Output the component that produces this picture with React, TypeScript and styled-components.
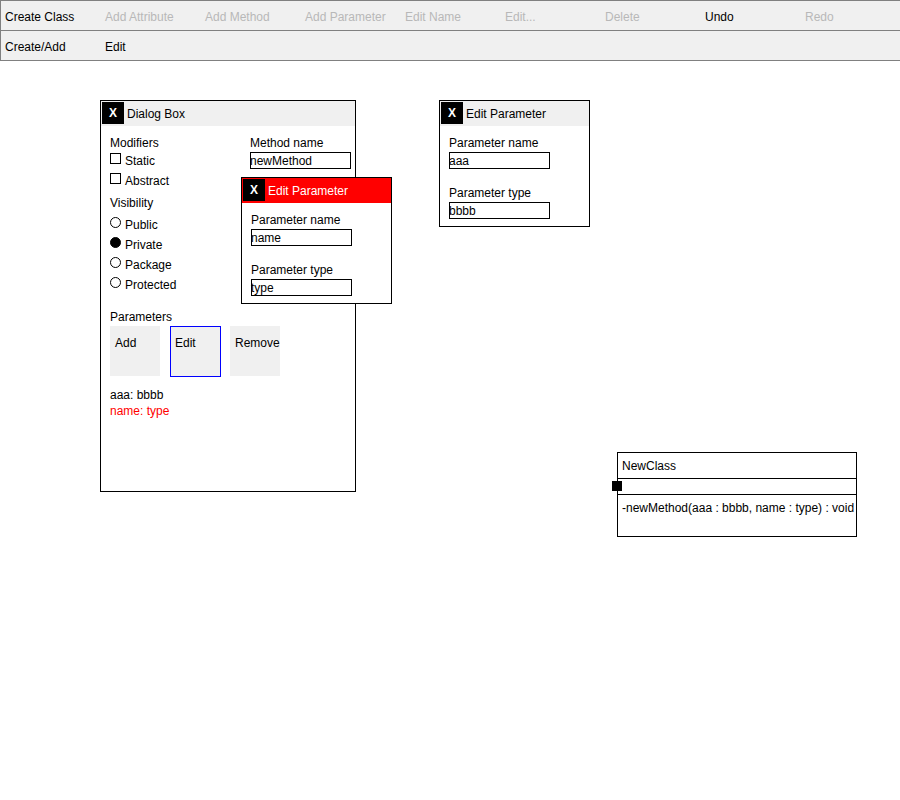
import React from "react";
import styled, { createGlobalStyle } from "styled-components";

const GlobalStyle = createGlobalStyle`
  html, body { margin: 0; padding: 0; background: #fff; }
  body {
    font-family: "Liberation Sans", Arial, sans-serif;
    font-size: 12px;
    color: #000;
  }
  * { box-sizing: border-box; }
`;

const Page = styled.div`
  width: 900px;
  height: 800px;
  display: flex;
  flex-direction: column;
  background: #fff;
`;

const Toolbar = styled.div`
  width: 900px;
  flex: none;
  border-top: 1px solid #808080;
  border-left: 1px solid #808080;
  background: #f0f0f0;
`;

const ToolRow = styled.div`
  display: flex;
  height: 30px;
  border-bottom: 1px solid #808080;
`;

const ToolButton = styled.div<{ $disabled?: boolean }>`
  flex: none;
  width: 100px;
  padding: 3px 0 0 4px;
  line-height: 27px;
  white-space: nowrap;
  color: ${(p) => (p.$disabled ? "#b8b8b8" : "#000")};
`;

const Canvas = styled.div`
  position: relative;
  flex: 1;
  background: #fff;
`;

const Window = styled.div<{ $x: number; $y: number; $w: number; $h: number }>`
  position: absolute;
  left: ${(p) => p.$x}px;
  top: ${(p) => p.$y}px;
  width: ${(p) => p.$w}px;
  height: ${(p) => p.$h}px;
  border: 1px solid #000;
  background: #fff;
  display: flex;
  flex-direction: column;
`;

const TitleBar = styled.div<{ $alert?: boolean }>`
  flex: none;
  height: 25px;
  display: flex;
  align-items: flex-start;
  background: ${(p) => (p.$alert ? "#ff0000" : "#f0f0f0")};
  color: ${(p) => (p.$alert ? "#fff" : "#000")};
`;

const CloseBox = styled.div`
  width: 22px;
  height: 22px;
  margin: 1px 0 0 1px;
  background: #000;
  color: #fff;
  font-weight: bold;
  font-size: 12px;
  display: flex;
  align-items: center;
  justify-content: center;
`;

const Title = styled.div`
  margin-left: 3px;
  padding-top: 1px;
  line-height: 25px;
  white-space: nowrap;
`;

const Content = styled.div`
  padding: 10px 9px 0 9px;
  display: flex;
  flex-direction: column;
`;

const Label = styled.div`
  line-height: 14px;
  height: 14px;
  white-space: nowrap;
`;

const FieldGroup = styled.div`
  display: flex;
  flex-direction: column;
  & + & {
    margin-top: 17px;
  }
`;

const FieldBox = styled.div`
  width: 101px;
  height: 17px;
  margin-top: 2px;
  border: 1px solid #000;
  line-height: 17px;
  text-indent: -1px;
  white-space: nowrap;
`;

const TopSection = styled.div`
  display: flex;
`;

const LeftCol = styled.div`
  width: 140px;
  flex: none;
  display: flex;
  flex-direction: column;
`;

const RightCol = styled.div`
  display: flex;
  flex-direction: column;
`;

const GroupLabel = styled(Label)<{ $gap?: number }>`
  margin-top: ${(p) => p.$gap ?? 0}px;
`;

const OptionList = styled.div<{ $gap: number }>`
  display: flex;
  flex-direction: column;
  margin-top: ${(p) => p.$gap}px;
`;

const OptionRow = styled.div`
  display: flex;
  align-items: flex-start;
  height: 20px;
  line-height: 20px;
  white-space: nowrap;
`;

const CheckMark = styled.span`
  width: 11px;
  height: 11px;
  margin: 2px 4px 0 0;
  border: 1px solid #000;
  background: #fff;
  flex: none;
`;

const RadioMark = styled.span<{ $checked?: boolean }>`
  width: 11px;
  height: 11px;
  margin: 2px 4px 0 0;
  border: 1px solid #000;
  border-radius: 50%;
  background: ${(p) => (p.$checked ? "#000" : "#fff")};
  flex: none;
`;

const ButtonGrid = styled.div`
  display: grid;
  grid-template-columns: repeat(3, 50px);
  column-gap: 10px;
  align-items: start;
  margin-top: 2px;
`;

const ParamButton = styled.div<{ $selected?: boolean }>`
  width: ${(p) => (p.$selected ? 51 : 50)}px;
  height: ${(p) => (p.$selected ? 51 : 50)}px;
  background: #f0f0f0;
  border: ${(p) => (p.$selected ? "1px solid #0000ff" : "none")};
  padding: ${(p) => (p.$selected ? "9px 0 0 4px" : "10px 0 0 5px")};
  line-height: 14px;
  white-space: nowrap;
  overflow: hidden;
`;

const ParamList = styled.div`
  margin-top: 10px;
  display: flex;
  flex-direction: column;
`;

const ParamItem = styled.div<{ $active?: boolean }>`
  line-height: 16px;
  color: ${(p) => (p.$active ? "#ff0000" : "#000")};
`;

const ClassBox = styled.div<{ $x: number; $y: number }>`
  position: absolute;
  left: ${(p) => p.$x}px;
  top: ${(p) => p.$y}px;
  width: 240px;
  border: 1px solid #000;
  background: #fff;
`;

const ClassHeader = styled.div`
  height: 26px;
  line-height: 25px;
  padding: 1px 0 0 4px;
  border-bottom: 1px solid #000;
`;

const AttrSection = styled.div`
  height: 16px;
  border-bottom: 1px solid #000;
`;

const MethodSection = styled.div`
  height: 41px;
  padding: 6px 0 0 4px;
  line-height: 14px;
  white-space: nowrap;
`;

const Handle = styled.div`
  position: absolute;
  left: -6px;
  top: 28px;
  width: 10px;
  height: 10px;
  background: #000;
`;

type ParamWinProps = { x: number; y: number; alert?: boolean; name: string; type: string };

const EditParameterWindow = ({ x, y, alert, name, type }: ParamWinProps) => (
  <Window $x={x} $y={y} $w={151} $h={127}>
    <TitleBar $alert={alert}>
      <CloseBox>X</CloseBox>
      <Title>Edit Parameter</Title>
    </TitleBar>
    <Content>
      <FieldGroup>
        <Label>Parameter name</Label>
        <FieldBox>{name}</FieldBox>
      </FieldGroup>
      <FieldGroup>
        <Label>Parameter type</Label>
        <FieldBox>{type}</FieldBox>
      </FieldGroup>
    </Content>
  </Window>
);

const toolsRow1: { label: string; disabled?: boolean }[] = [
  { label: "Create Class" },
  { label: "Add Attribute", disabled: true },
  { label: "Add Method", disabled: true },
  { label: "Add Parameter", disabled: true },
  { label: "Edit Name", disabled: true },
  { label: "Edit...", disabled: true },
  { label: "Delete", disabled: true },
  { label: "Undo" },
  { label: "Redo", disabled: true },
];

export default function App() {
  return (
    <Page>
      <GlobalStyle />
      <Toolbar>
        <ToolRow>
          {toolsRow1.map((t) => (
            <ToolButton key={t.label} $disabled={t.disabled}>
              {t.label}
            </ToolButton>
          ))}
        </ToolRow>
        <ToolRow>
          <ToolButton>Create/Add</ToolButton>
          <ToolButton>Edit</ToolButton>
        </ToolRow>
      </Toolbar>
      <Canvas>
        <Window $x={100} $y={39} $w={256} $h={392}>
          <TitleBar>
            <CloseBox>X</CloseBox>
            <Title>Dialog Box</Title>
          </TitleBar>
          <Content>
            <TopSection>
              <LeftCol>
                <Label>Modifiers</Label>
                <OptionList $gap={1}>
                  <OptionRow>
                    <CheckMark />
                    Static
                  </OptionRow>
                  <OptionRow>
                    <CheckMark />
                    Abstract
                  </OptionRow>
                </OptionList>
                <GroupLabel $gap={5}>Visibility</GroupLabel>
                <OptionList $gap={5}>
                  <OptionRow>
                    <RadioMark />
                    Public
                  </OptionRow>
                  <OptionRow>
                    <RadioMark $checked />
                    Private
                  </OptionRow>
                  <OptionRow>
                    <RadioMark />
                    Package
                  </OptionRow>
                  <OptionRow>
                    <RadioMark />
                    Protected
                  </OptionRow>
                </OptionList>
              </LeftCol>
              <RightCol>
                <FieldGroup>
                  <Label>Method name</Label>
                  <FieldBox>newMethod</FieldBox>
                </FieldGroup>
              </RightCol>
            </TopSection>
            <GroupLabel $gap={15}>Parameters</GroupLabel>
            <ButtonGrid>
              <ParamButton>Add</ParamButton>
              <ParamButton $selected>Edit</ParamButton>
              <ParamButton>Remove</ParamButton>
            </ButtonGrid>
            <ParamList>
              <ParamItem>aaa: bbbb</ParamItem>
              <ParamItem $active>name: type</ParamItem>
            </ParamList>
          </Content>
        </Window>
        <EditParameterWindow x={241} y={116} alert name="name" type="type" />
        <EditParameterWindow x={439} y={39} name="aaa" type="bbbb" />
        <ClassBox $x={617} $y={391}>
          <ClassHeader>NewClass</ClassHeader>
          <AttrSection />
          <MethodSection>-newMethod(aaa : bbbb, name : type) : void</MethodSection>
          <Handle />
        </ClassBox>
      </Canvas>
    </Page>
  );
}
